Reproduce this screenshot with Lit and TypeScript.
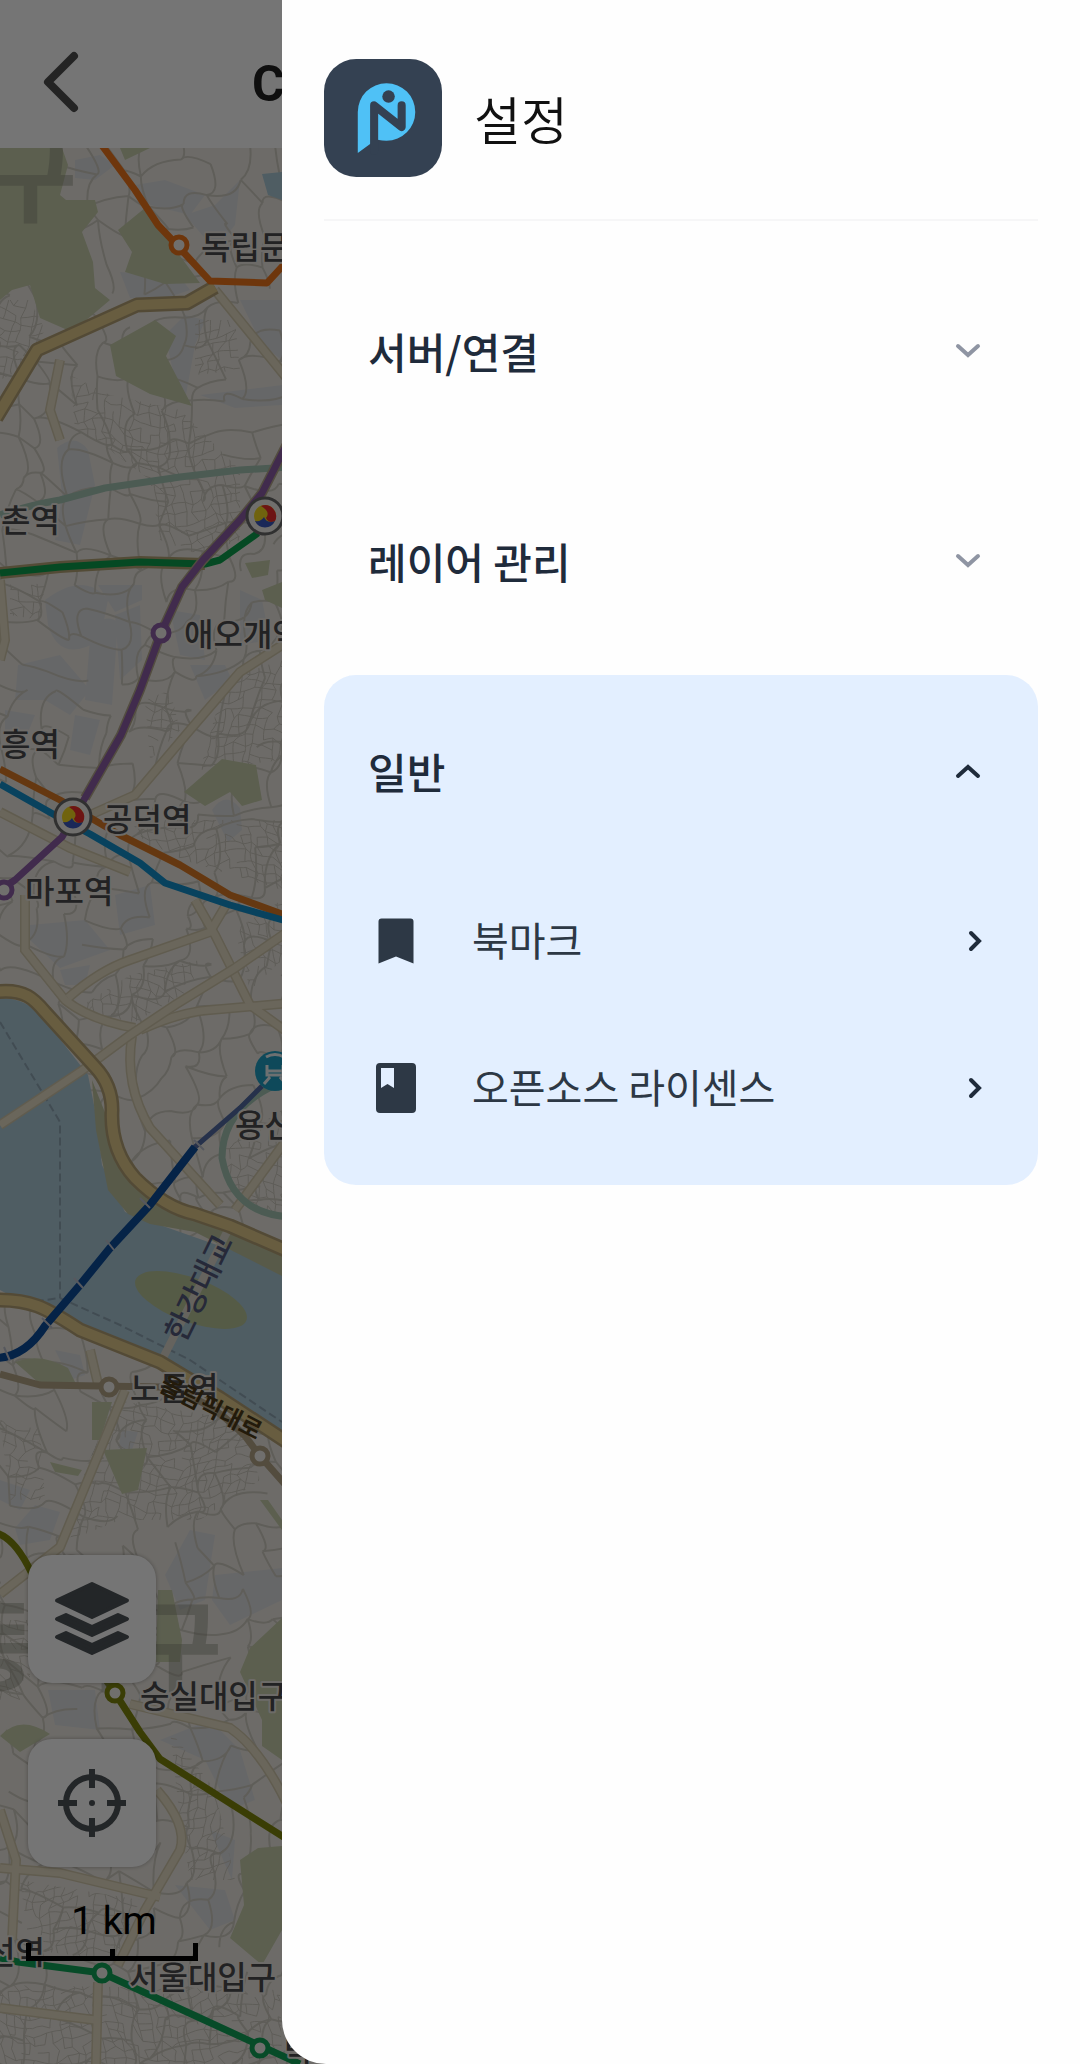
import { LitElement, html, svg, css } from "lit";
import { customElement, property, state } from "lit/decorators.js";

/** Repeatable noise in the range 0..1, used to lay out minor streets. */
function noise(a: number, b: number, seed: number): number {
  const v = Math.sin(a * 127.1 + b * 311.7 + seed * 74.7) * 43758.5453;
  return v - Math.floor(v);
}

/** A jittered net of bent streets covering the given box, as one path string. */
function streets(x0: number, y0: number, x1: number, y1: number, cell: number, keep: number, bend: number, seed: number): string {
  const cols = Math.ceil((x1 - x0) / cell);
  const rows = Math.ceil((y1 - y0) / cell);
  const at = (c: number, r: number): [number, number] => [
    x0 + (c + (noise(c, r, seed) - 0.5) * 0.7 + Math.sin(r * 0.15) * 1.5) * cell,
    y0 + (r + (noise(r, c, seed + 9) - 0.5) * 0.7 + Math.sin(c * 0.4) * 0.8) * cell,
  ];
  const f = (n: number) => Math.round(n * 10) / 10;
  const edge = (a: [number, number], b: [number, number], n: number) => {
    const k = (n - 0.5) * bend * cell;
    return `M${f(a[0])} ${f(a[1])}Q${f((a[0] + b[0]) / 2 + k)} ${f((a[1] + b[1]) / 2 + k)} ${f(b[0])} ${f(b[1])}`;
  };
  let d = "";
  for (let r = -1; r <= rows + 1; r++) {
    for (let c = -3; c <= cols + 2; c++) {
      if (noise(c, r, seed + 3) < keep) d += edge(at(c, r), at(c + 1, r), noise(c, r, seed + 13));
      if (noise(c, r, seed + 5) < keep) d += edge(at(c, r), at(c, r + 1), noise(c, r, seed + 17));
    }
  }
  return d;
}

const WIDE_STREETS = streets(0, 148, 300, 2064, 30, 0.7, 0.9, 1);
const DENSE_STREETS = streets(0, 148, 300, 2064, 9, 0.8, 0.2, 2);

const DENSE_AREAS =
  "M70 375L110 395L180 410L210 440L240 470L240 540L200 555L160 540L150 480L110 450L75 430Z" +
  "M0 300L30 300L45 330L20 370L0 380Z M195 320L235 320L240 370L195 375Z M10 580L45 585L40 620L10 615Z" +
  "M225 680L282 660L282 760L200 770Z M145 700L170 690L180 730L150 760Z M130 820L282 820L282 890L150 850Z" +
  "M75 1010L130 975L200 960L190 990L135 1022L90 1015Z M235 930L282 900L282 960L250 990Z" +
  "M220 1150L282 1110L282 1215L240 1205Z M0 1420L40 1430L45 1500L10 1500Z M115 1400L240 1420L260 1480L200 1520L120 1520L70 1540L85 1470Z" +
  "M20 1880L140 1900L115 1960L30 1950Z M0 1985L280 1990L282 2064L0 2064Z M170 1730L215 1790L235 1880L190 1880L180 1820Z M0 1620L30 1620L30 1700L0 1700Z";

const PARKS = [
  "M0 148H62L68 165L60 195L66 200L95 200L98 212L82 232L93 262L95 288L110 300L72 332L40 318L30 285L12 290L0 300Z",
  "M145 208L172 245L200 283L165 284L125 272L132 252L118 230Z",
  "M110 345L155 320L176 336L166 356L192 406L150 394L116 376Z",
  "M120 148H150L125 160Z",
  "M282 582L262 590L265 600L282 608Z",
  "M245 563L270 560L268 575L252 578Z",
  "M184 792L222 759L256 765L262 800L242 806L230 792L205 806Z",
  "M15 1362Q40 1352 68 1368L76 1384L40 1384Z",
  "M92 1402L112 1402L100 1440H92Z",
  "M103 1450L147 1448L138 1490L122 1494Z",
  "M50 1462L82 1470L78 1476L55 1472Z",
  "M158 1590H172L182 1640L180 1662H156Z",
  "M282 1618L250 1648L240 1672L262 1720L262 1746L282 1760Z",
  "M282 1846L258 1848L240 1860L244 1905L230 1938L262 1965L282 1930Z",
  "M0 1736Q20 1714 50 1734L20 1752Z",
  "M260 1500L282 1530V1520L268 1500Z",
];

const BLOCKS = [
  "M75 160L100 155L115 165L95 180L75 178Z",
  "M135 185L165 180L205 195L190 215L150 205Z",
  "M185 215L215 205L240 180L235 225L215 250Z",
  "M120 272L180 277L190 290L160 300L130 298Z",
  "M165 335L185 315L205 320L195 345L185 400L175 380Z",
  "M240 300H282V360L262 345Z",
  "M200 395L282 385V405L235 408Z",
  "M57 448Q75 432 88 450L95 485L80 545L55 540L62 495Z",
  "M45 600Q85 570 108 600L100 640Q60 665 48 625Z",
  "M98 585H142V600L115 612Z",
  "M115 615L140 605L142 660L120 680Z",
  "M90 640Q100 610 118 622L112 705L85 700Z",
  "M18 665L60 655L90 690L70 715L45 700L15 700Z",
  "M190 665L225 665L232 680L205 700Z",
  "M240 590L262 600L270 640L240 645Z",
  "M170 610L200 615L205 660L180 655Z",
  "M75 715L100 720L90 755L70 750Z",
  "M5 710L35 715L25 740L5 730Z",
  "M30 925L85 920L110 950L60 968L30 940Z",
  "M115 895L150 885L155 925L120 935Z",
  "M212 810Q225 790 240 808L242 830L228 842Z",
  "M60 970L90 965L85 985L65 985Z",
  "M55 1350L80 1355L85 1375L70 1380Z",
  "M15 1528L35 1505L60 1512L50 1540L20 1545Z",
  "M0 1480L30 1490L20 1510L0 1500Z",
  "M165 1575L190 1530L215 1535L205 1600L180 1610Z",
  "M215 1575L282 1568V1600L230 1625L212 1600Z",
  "M48 1690H95L100 1730L55 1725Z",
  "M160 1740L210 1720L240 1750L255 1800L230 1810L205 1760Z",
  "M175 1885L225 1890L235 1920L210 1930Z",
  "M210 1830L235 1840L232 1880Z",
  "M122 1430L138 1432L132 1450L118 1448Z",
];

const MINOR_ROADS = [
  "M25 895L25 950L65 1000Q90 1020 135 1028",
  "M68 998Q100 970 130 960L210 932L226 905",
  "M195 900L215 935L250 1005L290 1034",
  "M132 1036Q124 1085 150 1128L220 1205",
  "M140 1030Q180 1012 210 1010L290 1003",
  "M0 812L70 848L130 872",
  "M90 815L135 795L190 730L240 672L290 640",
  "M0 580L5 640L0 660",
  "M125 1390L60 1547L0 1594",
  "M90 1350L98 1384",
  "M130 1704L230 1728Q262 1750 290 1810",
  "M157 1790Q188 1825 180 1850L145 1910L118 1965",
  "M0 1868L60 1873L160 1897",
  "M0 1810L16 1860L12 1940",
  "M0 2008L95 2020",
  "M96 2064L98 1982",
  "M235 1210L290 1135",
  "M215 290L290 382",
  "M60 360L50 410L60 440",
];

const STATIONS: Array<{ x: number; y: number; color: string }> = [
  { x: 179, y: 245, color: "#f0761c" },
  { x: 161, y: 633, color: "#8e5ea8" },
  { x: 4, y: 890, color: "#8e5ea8" },
  { x: 109, y: 1387, color: "#b5a588" },
  { x: 260, y: 1456, color: "#b5a588" },
  { x: 115, y: 1693, color: "#7e860c" },
  { x: 102, y: 1973, color: "#10a458" },
  { x: 260, y: 2048, color: "#10a458" },
];

const LABELS: Array<{ text: string; x: number; y: number }> = [
  { text: "독립문", x: 201, y: 259 },
  { text: "촌역", x: 1, y: 532 },
  { text: "애오개역", x: 184, y: 646 },
  { text: "흥역", x: 1, y: 756 },
  { text: "공덕역", x: 103, y: 831 },
  { text: "마포역", x: 25, y: 903 },
  { text: "용산", x: 235, y: 1137 },
  { text: "노들역", x: 130, y: 1400 },
  { text: "숭실대입구", x: 140, y: 1708 },
  { text: "선역", x: -14, y: 1964 },
  { text: "서울대입구", x: 129, y: 1989 },
  { text: "낙", x: 284, y: 2062 },
];

@customElement("city-map")
export class CityMap extends LitElement {
  static styles = css`
    :host { display: block; overflow: hidden; background: #eeeae3; }
    svg { display: block; width: 100%; height: 100%; }
    .park { fill: #c8cfad; }
    .block { fill: #dfe0e3; }
    .street { fill: none; stroke: #d0ccc2; stroke-width: 2; }
    .street-dense { fill: none; stroke: #cdc9bf; stroke-width: 1; }
    .road-edge { fill: none; stroke: #d2c8ac; stroke-width: 10; }
    .road { fill: none; stroke: #e6dec6; stroke-width: 7; }
    .main-edge { fill: none; stroke: #b5a276; stroke-width: 15; stroke-linejoin: round; }
    .main { fill: none; stroke: #e2cb8c; stroke-width: 10; stroke-linejoin: round; }
    .water { fill: #accad8; }
    .ferry { fill: none; stroke: #8fa5b4; stroke-width: 2; stroke-dasharray: 8 4; }
    .rail { fill: none; stroke-width: 7; stroke-linejoin: round; }
    .area { font: 700 100px "Noto Sans CJK KR", sans-serif; fill: #7d8070; fill-opacity: 0.38; }
    .label {
      font: 500 32px "Noto Sans CJK KR", sans-serif;
      fill: #4a4b4e; stroke: #eeeae3; stroke-width: 4; paint-order: stroke; stroke-linejoin: round;
    }
    .bridge-label { font: 500 31px "Noto Sans CJK KR", sans-serif; fill: #54597c; }
    .road-label { font: 700 24px "Noto Sans CJK KR", sans-serif; fill: #4c3b18; }
  `;

  private transfer(x: number, y: number) {
    return svg`
      <g transform="translate(${x} ${y})">
        <circle r="18" fill="#f4f2ee" stroke="#6a6a6a" stroke-width="3"></circle>
        <circle r="11" fill="#f4d820"></circle>
        <path d="M-4 -10A11 11 0 0 1 10 5Q4 8 1 2Q6 -4 -4 -10Z" fill="#ee2c2c"></path>
        <path d="M10 5A11 11 0 0 1 -10 5Q-4 6 -1 1Q2 8 10 5Z" fill="#3a58c0"></path>
      </g>`;
  }

  render() {
    return html`
      <svg viewBox="0 148 1080 1916" preserveAspectRatio="xMinYMin slice" role="img" aria-label="지도">
        <defs><clipPath id="dense"><path d=${DENSE_AREAS}></path></clipPath></defs>
        ${BLOCKS.map((d) => svg`<path class="block" d=${d}></path>`)}
        <path class="street" d=${WIDE_STREETS}></path>
        <g clip-path="url(#dense)"><path class="street-dense" d=${DENSE_STREETS}></path></g>
        ${PARKS.map((d) => svg`<path class="park" d=${d}></path>`)}
        <path class="water" d="M262 174L282 172V200L268 195Z"></path>

        ${MINOR_ROADS.map((d) => svg`<path class="road-edge" d=${d}></path>`)}
        ${MINOR_ROADS.map((d) => svg`<path class="road" d=${d}></path>`)}

        <path class="water" d="M0 998Q28 998 45 1020L88 1075L95 1110L102 1165L125 1212L160 1225L282 1268V1440L230 1405L180 1375L130 1352L60 1322L0 1290Z"></path>
        <path d="M92 1080L96 1130L108 1190L128 1214L150 1224L195 1232L282 1276V1250L220 1230L150 1200L112 1130Z" fill="#bfc4a0"></path>
        <ellipse cx="191" cy="1300" rx="59" ry="22" transform="rotate(20 191 1300)" fill="#bac698"></ellipse>
        <path class="ferry" d="M0 1022L60 1122V1298"></path>
        <path class="ferry" d="M0 1306L60 1298L120 1325L190 1360L282 1422"></path>
        <path class="road-edge" d="M0 1125L80 1072L130 1035L175 1005L235 968L290 930"></path>
        <path class="road" d="M0 1125L80 1072L130 1035L175 1005L235 968L290 930"></path>
        <path d="M228 1230L163 1358" fill="none" stroke="#dcd8cc" stroke-width="8"></path>

        <path class="main-edge" d="M-5 992C25 988 35 1000 45 1012L95 1067Q112 1085 112 1110Q110 1150 135 1178Q165 1208 195 1214L230 1226L290 1252"></path>
        <path class="main" d="M-5 992C25 988 35 1000 45 1012L95 1067Q112 1085 112 1110Q110 1150 135 1178Q165 1208 195 1214L230 1226L290 1252"></path>
        <path class="main-edge" d="M-5 1300C30 1299 45 1307 80 1330L160 1362L220 1398L290 1444"></path>
        <path class="main" d="M-5 1300C30 1299 45 1307 80 1330L160 1362L220 1398L290 1444"></path>
        <path class="main-edge" d="M-4 418L37 350L137 305L187 303L215 287"></path>
        <path class="main" d="M-4 418L37 350L137 305L187 303L215 287"></path>

        <path class="rail" stroke="#a5c6b6" d="M0 515Q30 505 60 500L105 488L180 477L240 470L290 467"></path>
        <path class="rail" stroke="#a5c6b6" d="M275 1085Q222 1110 222 1158Q232 1214 290 1217"></path>
        <path d="M0 573L60 567L140 562L205 564" fill="none" stroke="#b5a476" stroke-width="12"></path>
        <path class="rail" stroke="#0ca04c" d="M0 573L60 567L140 562L205 564L220 560L258 533"></path>
        <path d="M290 438L262 493L240 520L203 560L182 587L161 633L140 690L121 735L85 798" fill="none" stroke="#b5a88c" stroke-width="10"></path>
        <path class="rail" stroke="#8e5ea8" d="M290 438L262 493L240 520L203 560L182 587L161 633L140 690L121 735L85 798L62 837L15 880L0 890"></path>
        <path class="rail" stroke="#dc7a26" d="M0 769L60 800L120 835L180 865L230 895L290 917"></path>
        <path class="rail" stroke="#1290cc" d="M0 784L60 818L90 834L140 863L165 883L230 905L290 922"></path>
        <path class="rail" stroke="#f0761c" d="M98 140L135 190L158 225L175 243L210 281L267 283L290 258"></path>
        <path d="M262 1086L240 1108L195 1147L150 1205" fill="none" stroke="#536ca4" stroke-width="5"></path>
        <path d="M195 1147L150 1205L110 1248L80 1285L45 1326Q25 1357 -4 1358" fill="none" stroke="#0c4c9c" stroke-width="8"></path>
        <path d="M194 1140L204 1150M140 1198L150 1208M106 1240L114 1250M74 1278L83 1288M42 1318L52 1328M4 1347L10 1361" stroke="#bdc1cc" stroke-width="2"></path>
        <path class="rail" stroke="#b5a588" d="M0 1374L40 1385L160 1387Q205 1395 245 1436L260 1456L290 1490"></path>
        <path class="rail" stroke="#7e860c" d="M-4 1533Q15 1538 32 1574M106 1680L115 1693L140 1732L160 1759L290 1841"></path>
        <path class="rail" stroke="#10a458" d="M0 1958L18 1962L102 1973L200 2018L300 2064"></path>

        <text class="area" x="-15" y="214">구</text>
        <text class="area" x="-54" y="1683">동작구</text>

        ${STATIONS.map((s) => svg`<circle cx=${s.x} cy=${s.y} r="8" fill="#f4f2ee" stroke=${s.color} stroke-width="5"></circle>`)}
        ${this.transfer(265, 516)} ${this.transfer(73, 817)}
        <circle cx="275" cy="1071" r="20" fill="#1fa0c4"></circle>
        <path d="M266 1057Q275 1052 284 1057M267 1065V1075H283V1065M267 1071H283M270 1077L264 1084M280 1077L286 1084" fill="none" stroke="#eef4f6" stroke-width="3"></path>

        ${LABELS.map((l) => svg`<text class="label" x=${l.x} y=${l.y}>${l.text}</text>`)}
        <text class="bridge-label" transform="translate(184 1344) rotate(-64)">한강대교</text>
        <text class="road-label" transform="translate(158 1390) rotate(27)">올림픽대로</text>
      </svg>`;
  }
}

@customElement("settings-section")
export class SettingsSection extends LitElement {
  static styles = css`
    :host { display: block; border-radius: 32px; color: #1f2b3b; }
    :host([open]) { background: #e3efff; padding-bottom: 24px; }
    .heading { margin: 0; font: inherit; }
    .toggle {
      display: flex; align-items: center; justify-content: space-between;
      width: 100%; height: 192px; padding: 0 57px 0 44px;
      border: 0; background: none; color: inherit; text-align: left; cursor: pointer;
      font: 500 42px/60px "Noto Sans CJK KR", sans-serif;
    }
    .chevron { width: 26px; height: 16px; flex: none; fill: none; stroke: #8f95a3; stroke-width: 4; stroke-linecap: round; }
    :host([open]) .chevron { stroke: #1f2b3b; }
  `;

  @property() label = "";
  @property({ type: Boolean, reflect: true }) open = false;

  private toggle() {
    this.open = !this.open;
  }

  render() {
    return html`
      <h2 class="heading">
        <button class="toggle" type="button" aria-expanded=${this.open ? "true" : "false"} @click=${this.toggle}>
          <span>${this.label}</span>
          <svg class="chevron" viewBox="0 0 26 16" aria-hidden="true">
            <path d=${this.open ? "M3 13L13 4L23 13" : "M3 3L13 12L23 3"}></path>
          </svg>
        </button>
      </h2>
      ${this.open ? html`<slot></slot>` : null}`;
  }
}

@customElement("app-root")
export class AppRoot extends LitElement {
  static styles = css`
    :host { display: block; font-family: "Noto Sans CJK KR", sans-serif; }
    * { box-sizing: border-box; }
    .screen { position: relative; display: flex; flex-direction: column; min-height: 100vh; overflow: hidden; background: #fff; }
    .topbar { display: flex; align-items: center; height: 148px; padding: 0 24px; gap: 152px; background: #fff; }
    .back { width: 76px; height: 76px; margin-bottom: -16px; padding: 0; border: 0; background: none; flex: none; }
    .back svg { display: block; width: 76px; height: 76px; fill: none; stroke: #505050; stroke-width: 8; stroke-linecap: round; stroke-linejoin: round; }
    .screen-title { margin: 0; padding-top: 20px; font: 700 50px/60px Roboto, sans-serif; color: #222; }
    .stage { position: relative; display: grid; flex: 1; }
    .map { position: absolute; inset: 0; }
    .controls { position: absolute; left: 28px; bottom: 103px; display: flex; flex-direction: column; gap: 56px; }
    .control {
      display: grid; place-items: center; width: 128px; height: 128px; padding: 0;
      border: 0; border-radius: 24px; background: #fff; color: #4e5357; box-shadow: 0 0 4px rgba(0, 0, 0, 0.3);
    }
    .control svg { width: 80px; height: 80px; }
    .scale { margin: -24px 0 0 -2px; width: 172px; color: #000; }
    .scale-label { padding-left: 4px; text-align: center; font: 400 39px/44px Roboto, sans-serif; }
    .scale-bar { display: flex; height: 18px; border: 5px solid #000; border-top: 0; justify-content: center; align-items: flex-end; }
    .scale-bar::after { content: ""; width: 5px; height: 7px; background: #000; }
    .scrim { position: absolute; inset: 0; background: rgba(0, 0, 0, 0.54); }
    .drawer {
      position: absolute; inset: 0 0 0 282px; overflow: hidden;
      padding: 59px 42px 0; background: #fefefe; border-bottom-left-radius: 44px;
    }
    .brand { display: flex; align-items: center; gap: 32px; padding-bottom: 42px; border-bottom: 2px solid #f6f6f7; }
    .logo { width: 118px; height: 118px; flex: none; }
    .drawer-title { margin: 0; color: #111; font: 350 51px/76px "Noto Sans CJK KR", sans-serif; }
    .sections { display: flex; flex-direction: column; gap: 18px; padding-top: 34px; }
    .items { margin: 0; padding: 0; list-style: none; }
    .item {
      display: flex; align-items: center; height: 147px; padding: 0 56px 0 42px; gap: 46px;
      color: #2d3845; text-decoration: none; font: 400 40px/58px "Noto Sans CJK KR", sans-serif;
    }
    .item-icon { width: 60px; height: 60px; flex: none; fill: #2d3845; }
    .item-label { flex: 1; padding-bottom: 4px; }
    .item-arrow { width: 14px; height: 22px; flex: none; fill: none; stroke: #1f2b3b; stroke-width: 4; stroke-linecap: round; }
  `;

  @state() private items = [
    { label: "북마크", href: "#bookmarks", icon: "M6.2 3H17.8Q19 3 19 4.2V21L12 18.2L5 21V4.2Q5 3 6.2 3Z" },
    {
      label: "오픈소스 라이센스",
      href: "#licenses",
      icon: "M5.6 2H18.4Q20 2 20 3.6V20.4Q20 22 18.4 22H5.6Q4 22 4 20.4V3.6Q4 2 5.6 2ZM6 4V12L8.6 10.4L11.2 12V4Z",
    },
  ];

  render() {
    return html`
      <div class="screen">
        <header class="topbar">
          <button class="back" type="button" aria-label="뒤로">
            <svg viewBox="0 0 76 76" aria-hidden="true"><path d="M50 12L24 38L50 64"></path></svg>
          </button>
          <h1 class="screen-title">C</h1>
        </header>
        <main class="stage">
          <city-map class="map"></city-map>
          <div class="controls">
            <button class="control" type="button" aria-label="레이어">
              <svg viewBox="0 0 80 80" fill="currentColor" stroke="currentColor" stroke-width="4" stroke-linejoin="round" aria-hidden="true">
                <path d="M40 5L75 21.500L40 38L5 21.500Z"></path>
                <path d="M5 40L14 36L40 48L66 36L75 40L40 56Z"></path>
                <path d="M5 58L14 54L40 66L66 54L75 58L40 74Z"></path>
              </svg>
            </button>
            <button class="control" type="button" aria-label="현재 위치">
              <svg viewBox="0 0 80 80" fill="none" stroke="currentColor" stroke-width="6" aria-hidden="true">
                <circle cx="40" cy="40" r="26"></circle>
                <path d="M40 6V25M40 55V74M6 40H25M55 40H74"></path>
                <circle cx="40" cy="40" r="3" fill="currentColor" stroke="none"></circle>
              </svg>
            </button>
            <div class="scale">
              <div class="scale-label">1 km</div>
              <div class="scale-bar"></div>
            </div>
          </div>
        </main>
        <div class="scrim"></div>
        <aside class="drawer">
          <div class="brand">
            <svg class="logo" viewBox="0 0 117 117" aria-hidden="true">
              <rect width="117" height="117" rx="32" fill="#344152"></rect>
              <path d="M33.500 93.300V52.500A28.500 28.500 0 1 1 62 81Q58 81 53 80L45.700 84.300Z" fill="#4fc1f6"></path>
              <path d="M49.700 91V46L77 67.500V46" fill="none" stroke="#344152" stroke-width="8" stroke-linecap="round" stroke-linejoin="round"></path>
              <circle cx="64" cy="37.300" r="6.200" fill="#344152"></circle>
            </svg>
            <h2 class="drawer-title">설정</h2>
          </div>
          <div class="sections">
            <settings-section label="서버/연결"></settings-section>
            <settings-section label="레이어 관리"></settings-section>
            <settings-section label="일반" open>
              <ul class="items">
                ${this.items.map(
                  (item) => html`
                    <li>
                      <a class="item" href=${item.href}>
                        <svg class="item-icon" viewBox="0 0 24 24" aria-hidden="true"><path fill-rule="evenodd" d=${item.icon}></path></svg>
                        <span class="item-label">${item.label}</span>
                        <svg class="item-arrow" viewBox="0 0 14 22" aria-hidden="true"><path d="M3 3L11 11L3 19"></path></svg>
                      </a>
                    </li>`
                )}
              </ul>
            </settings-section>
          </div>
        </aside>
      </div>`;
  }
}
